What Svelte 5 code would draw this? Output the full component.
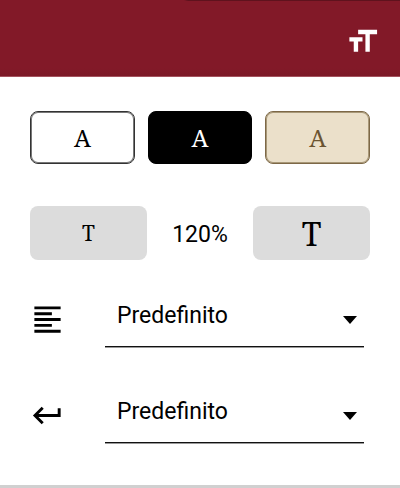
<script>
  const themes = [
    { id: 'light', label: 'Tema chiaro' },
    { id: 'dark', label: 'Tema scuro' },
    { id: 'sepia', label: 'Tema seppia' },
  ];

  const settings = [
    {
      id: 'align',
      label: 'Allineamento',
      icon: 'M3 3h18v2H3zM3 7h12v2H3zM3 11h18v2H3zM3 15h12v2H3zM3 19h18v2H3z',
    },
    {
      id: 'spacing',
      label: 'Interlinea',
      icon: 'M19 7v4H5.83l3.58-3.59L8 6l-6 6 6 6 1.41-1.41L5.83 13H21V7z',
    },
  ];

  let theme = $state('light');
  let zoom = $state(120);
</script>

<header>
  <button class="toggle" aria-label="Dimensione testo">
    <svg viewBox="0 0 24 24" aria-hidden="true">
      <path d="M9 4v3h5v12h3V7h5V4H9zm-6 8h3v7h3v-7h3V9H3v3z" />
    </svg>
  </button>
</header>

<main>
  <div class="themes">
    {#each themes as t}
      <button
        class="theme {t.id}"
        aria-label={t.label}
        aria-pressed={theme === t.id}
        onclick={() => (theme = t.id)}>A</button>
    {/each}
  </div>

  <div class="sizes">
    <button class="size smaller" aria-label="Riduci testo" onclick={() => (zoom -= 10)}>T</button>
    <output>{zoom}%</output>
    <button class="size larger" aria-label="Ingrandisci testo" onclick={() => (zoom += 10)}>T</button>
  </div>

  {#each settings as s}
    <div class="setting">
      <label for={s.id} aria-label={s.label}>
        <svg viewBox="0 0 24 24" aria-hidden="true"><path d={s.icon} /></svg>
      </label>
      <div class="field">
        <select id={s.id}>
          <option>Predefinito</option>
        </select>
        <svg class="arrow" viewBox="0 0 16 8" aria-hidden="true"><path d="M1 0h14L8 8z" /></svg>
      </div>
    </div>
  {/each}
</main>

<style>
  :global(body) {
    margin: 0;
    background: #fff;
    color: #000;
    font-family: Roboto, sans-serif;
  }

  header {
    display: flex;
    justify-content: flex-end;
    align-items: center;
    box-sizing: border-box;
    height: 77px;
    padding: 6px 20px 0;
    background:
      linear-gradient(90deg, transparent 46%, #5f121d 47%) top / 100% 1px no-repeat,
      linear-gradient(#821928 90%, #7b1826);
    border-bottom: 1px solid #a4525e;
  }

  button {
    margin: 0;
    padding: 0;
    border: 0;
    color: inherit;
    cursor: pointer;
  }

  svg {
    display: block;
    width: 35px;
    height: 35px;
    fill: currentColor;
  }

  .toggle {
    background: none;
    color: #fff;
  }

  main {
    padding: 34px 30px 42px;
    border-bottom: 3px solid #d0d0d0;
  }

  .themes {
    display: flex;
    gap: 13px;
  }

  .theme,
  .size {
    box-sizing: border-box;
    border-radius: 8px;
    font-family: 'Noto Serif', 'DejaVu Serif Condensed', 'DejaVu Serif', serif;
  }

  .theme {
    flex: 1;
    height: 53px;
    border: 1px solid #333;
    box-shadow: inset 0 0 0 1px #777;
    font-size: 24px;
    background: #fff;
  }

  .dark {
    border-color: #000;
    box-shadow: none;
    background: #000;
    color: #fff;
  }

  .sepia {
    border-color: #7d6847;
    box-shadow: inset 0 0 0 1px #a89878;
    background: #ebe0ca;
    color: #6b5431;
  }

  .sizes {
    display: flex;
    align-items: center;
    margin-top: 42px;
  }

  .size {
    flex: 11;
    height: 54px;
    background: #dcdcdc;
  }

  .smaller {
    font-size: 21px;
  }

  .larger {
    font-size: 32px;
  }

  output {
    flex: 10;
    padding-top: 2px;
    text-align: center;
    font-size: 23px;
  }

  .setting {
    display: flex;
    align-items: center;
    height: 55px;
    margin: 32px 6px 0 0;
  }

  .setting + .setting {
    margin-top: 41px;
  }

  .field {
    position: relative;
    flex: 1;
    margin-left: 40px;
  }

  select {
    display: block;
    box-sizing: border-box;
    width: 100%;
    height: 55px;
    padding: 0 40px 8px 12px;
    border: 0;
    border-bottom: 1px solid #111;
    box-shadow: 0 1px #999;
    border-radius: 0;
    appearance: none;
    background: none;
    color: inherit;
    font: 23px Roboto, sans-serif;
  }

  .arrow {
    position: absolute;
    top: 24px;
    right: 6px;
    width: 16px;
    height: 8px;
    pointer-events: none;
  }
</style>
